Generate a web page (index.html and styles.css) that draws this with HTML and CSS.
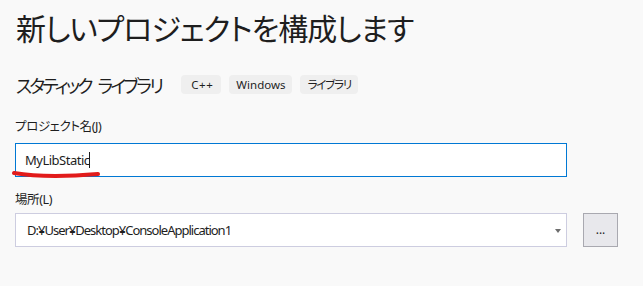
FILE: index.html
```html
<!DOCTYPE html>
<html>
  <head>
    <meta charset="utf-8">
    <title>新しいプロジェクトを構成します</title>
    <link rel="stylesheet" href="styles.css">
  </head>
  <body>
    <h1 class="page-title">新しいプロジェクトを構成します</h1>

    <div class="template-row">
      <span class="template-name"><span>スタティック</span> <span>ライブラリ</span></span>
      <span class="tag tag-lang">C++</span>
      <span class="tag">Windows</span>
      <span class="tag tag-jp">ライブラリ</span>
    </div>

    <label class="field-label">プロジェクト名(J)</label>
    <div class="field-wrap">
      <div class="text-box focused">MyLibStatic<span class="caret"></span></div>
      <svg class="scribble" width="90" height="10" viewBox="0 0 90 10">
        <path d="M2 3 C 20 6, 50 7, 86 4" stroke="#e21b1b" stroke-width="4" fill="none" stroke-linecap="round"/>
      </svg>
    </div>

    <label class="field-label location">場所(L)</label>
    <div class="location-row">
      <div class="text-box combo">
        <span>D:¥User¥Desktop¥ConsoleApplication1</span>
        <span class="arrow"></span>
      </div>
      <button class="browse-btn">...</button>
    </div>
  </body>
</html>
```

FILE: styles.css
```css
* {
  margin: 0;
  padding: 0;
  box-sizing: border-box;
}

html, body {
  height: 100%;
  overflow: hidden;
}

body {
  background: #f9f9f9;
  color: #1e1e1e;
  font-family: 'Noto Sans', 'Noto Sans CJK JP', sans-serif;
  font-feature-settings: "palt";
  padding: 0 76px 0 15px;
}

.page-title {
  font-family: 'Noto Sans CJK JP', sans-serif;
  font-weight: 400;
  font-size: 30px;
  line-height: 40px;
  margin-top: 7px;
  margin-left: 1px;
  letter-spacing: -1px;
}

.template-row {
  display: flex;
  align-items: center;
  margin-top: 28px;
  height: 19px;
}

.template-name {
  display: flex;
  gap: 7px;
  font-family: 'Noto Sans CJK JP', sans-serif;
  font-size: 18px;
  margin-left: 1px;
  margin-right: 20px;
  letter-spacing: -2.8px;
}

.tag {
  background: #efefef;
  border-radius: 4px;
  height: 19px;
  line-height: 19px;
  padding: 0 7px;
  font-size: 11.5px;
  margin-right: 8px;
}

.tag-lang {
  padding: 0 8px 0 10px;
  letter-spacing: 0.6px;
}

.tag-jp {
  letter-spacing: -1.2px;
}

.field-label {
  display: block;
  font-size: 12.5px;
  margin-top: 22px;
  letter-spacing: -0.4px;
}

.field-label.location {
  margin-top: 12px;
}

.field-wrap {
  position: relative;
  margin-top: 8px;
}

.text-box {
  height: 34px;
  background: #ffffff;
  border: 1px solid #cdcde0;
  display: flex;
  align-items: center;
  font-size: 13px;
  padding-left: 9px;
}

.text-box.focused {
  border-color: #0078d4;
  letter-spacing: -0.5px;
}

.caret {
  display: inline-block;
  width: 1px;
  height: 16px;
  background: #1e1e1e;
  margin-left: -1px;
}

.scribble {
  position: absolute;
  left: -3px;
  top: 27px;
}

.location-row {
  display: flex;
  gap: 16px;
  margin-top: 5px;
  margin-right: -51px;
}

.combo {
  flex: 1;
  padding-left: 11px;
  padding-right: 5px;
  justify-content: space-between;
  letter-spacing: -1px;
}

.arrow {
  width: 0;
  height: 0;
  border-left: 3px solid transparent;
  border-right: 3px solid transparent;
  border-top: 4px solid #6e6e6e;
  margin-top: 2px;
}

.browse-btn {
  width: 35px;
  height: 34px;
  background: #e8e8ec;
  border: 1px solid #a9a9b0;
  font-family: 'Noto Sans', sans-serif;
  font-size: 12px;
  color: #1e1e1e;
  line-height: 1;
}
```
